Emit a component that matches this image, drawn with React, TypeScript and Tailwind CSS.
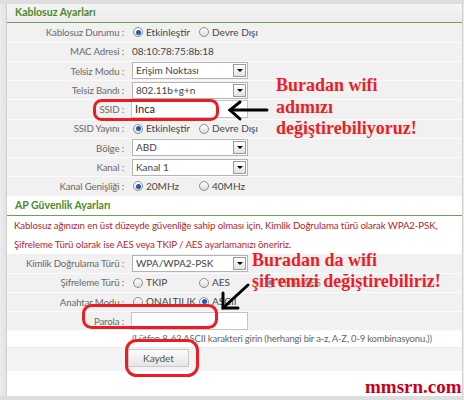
import React from "react";

type RadioProps = { label: string; checked?: boolean };

function Radio({ label, checked }: RadioProps) {
  return (
    <span className="flex w-[66px] shrink-0 items-center gap-[3px]">
      <span className="flex h-[10px] w-[10px] items-center justify-center rounded-full border border-[#8e8e8e] bg-gradient-to-b from-white to-[#dcdcdc]">
        {checked && <span className="h-[5px] w-[5px] rounded-full bg-[#1d5cb4]" />}
      </span>
      <span className="whitespace-nowrap">{label}</span>
    </span>
  );
}

function Select({ value }: { value: string }) {
  return (
    <div className="ml-[2px] flex h-[17px] w-[116px] items-center justify-between border border-[#b4b4b4] bg-white pl-[3px] pr-[1px] text-[#444]">
      <span>{value}</span>
      <span className="flex h-[13px] w-[13px] items-center justify-center border border-[#9a9a9a] bg-gradient-to-b from-white to-[#e2e2e2]">
        <span className="h-0 w-0 border-x-[3px] border-t-[3px] border-x-transparent border-t-black" />
      </span>
    </div>
  );
}

function TextInput({ value = "" }: { value?: string }) {
  return (
    <div className="ml-[1px] flex h-[18px] w-[117px] items-center border border-[#c4c4c4] bg-white pl-[3px] text-[11px] text-[#222]">
      {value}
    </div>
  );
}

function Row({ label, children, white }: { label: string; children?: React.ReactNode; white?: boolean }) {
  return (
    <div className={`flex h-[19.25px] items-center border-b border-[#fbfbfb] ${white ? "bg-white" : "bg-[#f1f1f1]"}`}>
      <div className="w-[121px] shrink-0 whitespace-nowrap pr-[4px] text-right text-[9.7px] tracking-[-0.15px] text-[#6a6a6a]">
        {label}
      </div>
      <div className="flex items-center pl-[2px] text-[#474747]">{children}</div>
    </div>
  );
}

function Header({ title, white }: { title: string; white?: boolean }) {
  return (
    <div
      className={`flex h-[19.25px] items-center border-b border-[#6f9e5f] pl-[8px] text-[10.5px] font-bold text-[#4d8a2c] ${
        white ? "bg-white" : "bg-gradient-to-b from-[#f5f5f5] to-[#ececec]"
      }`}
    >
      {title}
    </div>
  );
}

function Note({ children }: { children: React.ReactNode }) {
  return (
    <div className="flex h-[19.25px] items-center whitespace-nowrap bg-white pl-[7px] text-[9.7px] tracking-[-0.12px] text-[#b3262b]">
      {children}
    </div>
  );
}

export default function App() {
  return (
    <div className="relative h-[400px] w-[464px] overflow-hidden bg-[#dedede] font-['Lato',sans-serif] text-[10px]">
      <div className="flex h-full pt-[4px] pb-[4px]">
        <div className="w-[7px] shrink-0 border-r border-[#cfcfcf] bg-gradient-to-r from-[#ececec] to-[#e2e2e2]" />
        <div className="flex w-[455px] flex-col bg-white">
          <Header title="Kablosuz Ayarları" />
          <Row label="Kablosuz Durumu :">
            <span className="flex pl-[3px]">
              <Radio label="Etkinleştir" checked />
              <Radio label="Devre Dışı" />
            </span>
          </Row>
          <Row label="MAC Adresi :">
            <span className="pl-[2px]">08:10:78:75:8b:18</span>
          </Row>
          <Row label="Telsiz Modu :">
            <Select value="Erişim Noktası" />
          </Row>
          <Row label="Telsiz Bandı :">
            <Select value="802.11b+g+n" />
          </Row>
          <Row label="SSID :">
            <TextInput value="Inca" />
          </Row>
          <Row label="SSID Yayını :">
            <span className="flex pl-[3px]">
              <Radio label="Etkinleştir" checked />
              <Radio label="Devre Dışı" />
            </span>
          </Row>
          <Row label="Bölge :">
            <Select value="ABD" />
          </Row>
          <Row label="Kanal :">
            <Select value="Kanal 1" />
          </Row>
          <Row label="Kanal Genişliği :">
            <span className="flex pl-[3px]">
              <Radio label="20MHz" checked />
              <Radio label="40MHz" />
            </span>
          </Row>

          <Header title="AP Güvenlik Ayarları" white />
          <Note>
            Kablosuz ağınızın en üst düzeyde güvenliğe sahip olması için, Kimlik Doğrulama türü olarak WPA2-PSK,
          </Note>
          <Note>Şifreleme Türü olarak ise AES veya TKIP / AES ayarlamanızı öneririz.</Note>
          <Row label="Kimlik Doğrulama Türü :">
            <Select value="WPA/WPA2-PSK" />
          </Row>
          <Row label="Şifreleme Türü :">
            <span className="flex pl-[3px]">
              <Radio label="TKIP" />
              <Radio label="AES" />
              <span className="opacity-60">
                <Radio label="TKIP/AES" checked />
              </span>
            </span>
          </Row>
          <Row label="Anahtar Modu :">
            <span className="flex pl-[3px]">
              <Radio label="ONALTILIK" />
              <Radio label="ASCII" checked />
            </span>
          </Row>
          <Row label="Parola :">
            <TextInput />
          </Row>
          <div className="flex h-[17px] items-center border-b border-[#ececec] bg-white pl-[125px] text-[9.5px] tracking-[-0.2px] text-[#666]">
            (Lütfen 8-63 ASCII karakteri girin (herhangi bir a-z, A-Z, 0-9 kombinasyonu.))
          </div>
          <div className="flex h-[23px] items-start bg-[#f3f3f3] pl-[121px] pt-[1px]">
            <button className="flex h-[18px] w-[61px] items-center justify-center border border-[#c9c9c9] bg-gradient-to-b from-[#fbfbfb] to-[#e6e6e6] text-[10px] text-[#555]">
              Kaydet
            </button>
          </div>
          <div className="flex-1 bg-white" />
        </div>
        <div className="w-[2px] shrink-0 border-l border-[#cfcfcf] bg-[#ececec]" />
      </div>

      {/* red marker boxes and arrows drawn over the form */}
      <svg className="pointer-events-none absolute left-0 top-0" width="464" height="400" viewBox="0 0 464 400">
        <g fill="none" stroke="#ec1c24" strokeWidth="3">
          <rect x="94.5" y="100.5" width="123" height="19" rx="7" />
          <rect x="83.5" y="305.5" width="133" height="22" rx="8" />
          <rect x="126.5" y="340.5" width="71" height="35" rx="10" />
        </g>
        <g fill="none" stroke="#000" strokeWidth="3" strokeLinecap="round">
          <path d="M230 110 H267" />
          <path d="M240 102 L230 110 L240 119" />
          <path d="M248 285 L223 308" />
          <path d="M223 293 V308 H238" />
        </g>
      </svg>

      <div className="pointer-events-none absolute left-[276px] top-[75px] font-['Liberation_Serif',serif] text-[18px] font-bold leading-[21.5px] text-[#ee1d25]">
        <div>Buradan wifi</div>
        <div>adımızı</div>
        <div>değiştirebiliyoruz!</div>
      </div>
      <div className="pointer-events-none absolute left-[252px] top-[250px] font-['Liberation_Serif',serif] text-[18px] font-bold leading-[21px] text-[#ee1d25]">
        <div>Buradan da wifi</div>
        <div>şifremizi değiştirebiliriz!</div>
      </div>
      <div className="pointer-events-none absolute left-[365px] top-[377px] font-['Liberation_Serif',serif] text-[19px] font-bold leading-[19px] text-[#c8001c]">
        mmsrn.com
      </div>
    </div>
  );
}
